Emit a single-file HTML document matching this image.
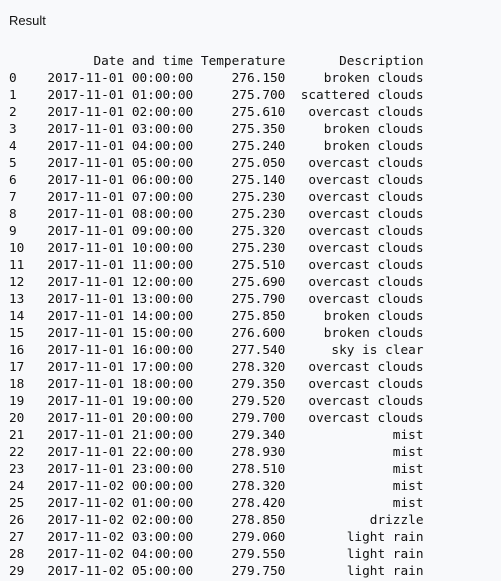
<!DOCTYPE html>
<html><head><meta charset="utf-8"><style>
html,body{margin:0;padding:0;background:#f8f9fb;width:501px;height:581px;overflow:hidden}
.t{position:absolute;left:9px;top:13px;font:13px "Liberation Sans",sans-serif;color:#111}
pre{position:absolute;left:9px;top:53px;margin:0;font:12.75px/17px "DejaVu Sans Mono","Liberation Mono",monospace;color:#111}
</style></head><body>
<div class="t">Result</div>
<pre>           Date and time Temperature       Description
0    2017-11-01 00:00:00     276.150     broken clouds
1    2017-11-01 01:00:00     275.700  scattered clouds
2    2017-11-01 02:00:00     275.610   overcast clouds
3    2017-11-01 03:00:00     275.350     broken clouds
4    2017-11-01 04:00:00     275.240     broken clouds
5    2017-11-01 05:00:00     275.050   overcast clouds
6    2017-11-01 06:00:00     275.140   overcast clouds
7    2017-11-01 07:00:00     275.230   overcast clouds
8    2017-11-01 08:00:00     275.230   overcast clouds
9    2017-11-01 09:00:00     275.320   overcast clouds
10   2017-11-01 10:00:00     275.230   overcast clouds
11   2017-11-01 11:00:00     275.510   overcast clouds
12   2017-11-01 12:00:00     275.690   overcast clouds
13   2017-11-01 13:00:00     275.790   overcast clouds
14   2017-11-01 14:00:00     275.850     broken clouds
15   2017-11-01 15:00:00     276.600     broken clouds
16   2017-11-01 16:00:00     277.540      sky is clear
17   2017-11-01 17:00:00     278.320   overcast clouds
18   2017-11-01 18:00:00     279.350   overcast clouds
19   2017-11-01 19:00:00     279.520   overcast clouds
20   2017-11-01 20:00:00     279.700   overcast clouds
21   2017-11-01 21:00:00     279.340              mist
22   2017-11-01 22:00:00     278.930              mist
23   2017-11-01 23:00:00     278.510              mist
24   2017-11-02 00:00:00     278.320              mist
25   2017-11-02 01:00:00     278.420              mist
26   2017-11-02 02:00:00     278.850           drizzle
27   2017-11-02 03:00:00     279.060        light rain
28   2017-11-02 04:00:00     279.550        light rain
29   2017-11-02 05:00:00     279.750        light rain</pre>
</body></html>
